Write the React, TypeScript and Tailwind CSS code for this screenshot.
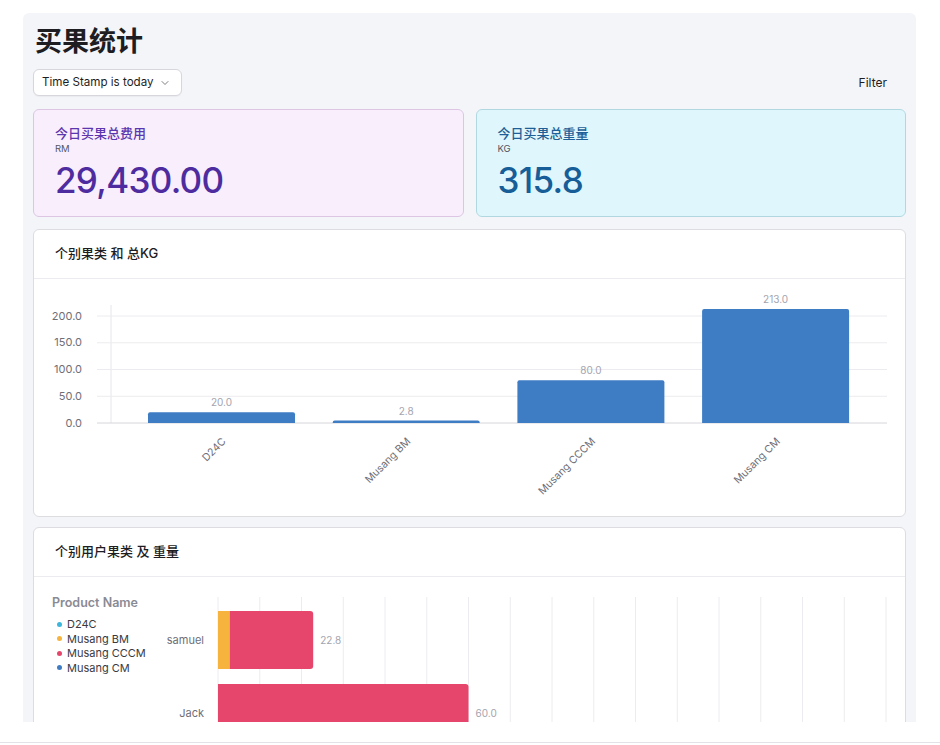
import { ChevronDown } from 'lucide-react';

const font = "font-['Inter','Noto_Sans_CJK_SC',sans-serif]";

const fruits = [
  { name: 'D24C', kg: 20.0 },
  { name: 'Musang BM', kg: 2.8 },
  { name: 'Musang CCCM', kg: 80.0 },
  { name: 'Musang CM', kg: 213.0 },
];

const legend = [
  { name: 'D24C', color: '#3cb6dc' },
  { name: 'Musang BM', color: '#f6b33d' },
  { name: 'Musang CCCM', color: '#e7466c' },
  { name: 'Musang CM', color: '#3e7dc4' },
];

function StatCard({
  title,
  unit,
  value,
  tone,
}: {
  title: string;
  unit: string;
  value: string;
  tone: 'purple' | 'cyan';
}) {
  const purple = tone === 'purple';
  return (
    <div
      className={
        purple
          ? 'h-[108px] rounded-[6px] border border-[#dcc6e3] bg-[#f9effc] px-[21px] pt-[13px]'
          : 'h-[108px] rounded-[6px] border border-[#b1d8e1] bg-[#dff7fc] px-[21px] pt-[13px]'
      }
    >
      <div className={purple ? 'text-[13px] leading-[20px] font-medium text-[#5b36ae]' : 'text-[13px] leading-[20px] font-medium text-[#1d5f96]'}>
        {title}
      </div>
      <div className="text-[9.5px] leading-[12px] text-[#55555c]">{unit}</div>
      <div
        className={
          purple
            ? 'mt-[3px] text-[35px] leading-[44px] font-medium tracking-[-0.02em] text-[#4e2c9f]'
            : 'mt-[3px] text-[35px] leading-[44px] font-medium tracking-[-0.02em] text-[#175e98]'
        }
      >
        {value}
      </div>
    </div>
  );
}

function KgChart() {
  const base = 144;
  const scale = 107 / 200;
  const ticks = [0, 50, 100, 150, 200];
  return (
    <svg width="870" height="237" className="block">
      <line x1="77" y1="26" x2="77" y2={base} stroke="#e6e6ea" />
      {ticks.map((t) => {
        const y = base - t * scale;
        return (
          <g key={t}>
            <line x1="63" x2="853" y1={y} y2={y} stroke={t === 0 ? '#d6d6dc' : '#ececf0'} />
            <text x="48" y={y + 3.5} textAnchor="end" fontSize="11" fill="#6e6e78">
              {t.toFixed(1)}
            </text>
          </g>
        );
      })}
      {fruits.map((f, i) => {
        const x = 114 + i * 184.7;
        const h = Math.max(f.kg * scale, 2.5);
        const cx = x + 73.5;
        return (
          <g key={f.name}>
            <path
              d={`M${x},${base} L${x},${base - h + 2} Q${x},${base - h} ${x + 2},${base - h} L${x + 145},${base - h} Q${x + 147},${base - h} ${x + 147},${base - h + 2} L${x + 147},${base} Z`}
              fill="#3e7dc4"
            />
            <text x={cx} y={base - h - 6} textAnchor="middle" fontSize="10" fill="#a4a4ae">
              {f.kg.toFixed(1)}
            </text>
            <text
              x={cx + 5}
              y={163}
              textAnchor="end"
              fontSize="10.5"
              fill="#6e6e78"
              transform={`rotate(-45 ${cx + 5} 163)`}
            >
              {f.name}
            </text>
          </g>
        );
      })}
    </svg>
  );
}

function UserChart() {
  const x0 = 78;
  const unit = 4.175;
  const lines = Array.from({ length: 17 }, (_, i) => x0 + i * 41.75);
  const rows = [
    { name: 'samuel', y: 34, parts: [{ v: 2.8, c: '#f6b33d' }, { v: 20, c: '#e7466c' }], total: 22.8 },
    { name: 'Jack', y: 107, parts: [{ v: 60, c: '#e7466c' }], total: 60.0 },
  ];
  return (
    <svg width="765" height="200" className="block shrink-0">
      {lines.map((x) => (
        <line key={x} x1={x} x2={x} y1="20" y2="200" stroke="#ececf0" />
      ))}
      {rows.map((r) => {
        let cur = x0;
        const end = x0 + r.total * unit;
        return (
          <g key={r.name}>
            {r.parts.map((p, i) => {
              const w = p.v * unit;
              const x = cur;
              cur += w;
              const last = i === r.parts.length - 1;
              return last ? (
                <path
                  key={i}
                  d={`M${x},${r.y} L${x + w - 3},${r.y} Q${x + w},${r.y} ${x + w},${r.y + 3} L${x + w},${r.y + 55} Q${x + w},${r.y + 58} ${x + w - 3},${r.y + 58} L${x},${r.y + 58} Z`}
                  fill={p.c}
                />
              ) : (
                <rect key={i} x={x} y={r.y} width={w} height="58" fill={p.c} />
              );
            })}
            <text x="64" y={r.y + 33} textAnchor="end" fontSize="11" fill="#6e6e78">
              {r.name}
            </text>
            <text x={end + 7} y={r.y + 33} fontSize="10" fill="#a4a4ae">
              {r.total.toFixed(1)}
            </text>
          </g>
        );
      })}
    </svg>
  );
}

function ChartCard({ title, children }: { title: string; children: React.ReactNode }) {
  return (
    <div className="rounded-[6px] border border-[#dcdce1] bg-white">
      <div className="h-[49px] border-b border-[#ececf0] pl-[21px] flex items-center text-[13px] font-medium text-[#1c1c22]">
        {title}
      </div>
      {children}
    </div>
  );
}

export default function App() {
  return (
    <div className={`w-[940px] h-[745px] bg-white overflow-hidden ${font}`}>
      <div className="pl-[23px] pr-[24px] pt-[13px]">
        <div className="h-[709px] overflow-hidden rounded-t-[6px] bg-[#f4f5f9] px-[10px] pt-[11px]">
          <h1 className="pl-[2px] text-[27px] leading-[36px] font-semibold text-[#1d1d22]">买果统计</h1>
          <div className="mt-[9px] flex items-center justify-between">
            <button className="flex h-[27px] w-[149px] items-center justify-between rounded-[6px] border border-[#d6d6dc] bg-white pl-[8px] pr-[10px] text-[11.6px] text-[#1d1d22] shadow-[0_1px_1px_rgba(0,0,0,0.04)]">
              <span>Time Stamp is today</span>
              <ChevronDown size={12} strokeWidth={1.5} className="text-[#55555c]" />
            </button>
            <button className="pr-[19px] text-[12px] text-[#1d1d22]">Filter</button>
          </div>
          <div className="mt-[13px] grid grid-cols-2 gap-[12px]">
            <StatCard title="今日买果总费用" unit="RM" value="29,430.00" tone="purple" />
            <StatCard title="今日买果总重量" unit="KG" value="315.8" tone="cyan" />
          </div>
          <div className="mt-[12px]">
            <ChartCard title="个别果类 和 总KG">
              <KgChart />
            </ChartCard>
          </div>
          <div className="mt-[10px]">
            <ChartCard title="个别用户果类 及 重量">
              <div className="flex">
                <div className="w-[106px] shrink-0 pl-[18px] pt-[17px]">
                  <div className="text-[12.5px] leading-[18px] font-semibold text-[#8a8a94] whitespace-nowrap">Product Name</div>
                  <div className="mt-[5px] flex flex-col">
                    {legend.map((l) => (
                      <div key={l.name} className="flex h-[14.5px] items-center gap-[5px] pl-[5px] text-[11px] text-[#3a3a42] whitespace-nowrap">
                        <span className="h-[5px] w-[5px] shrink-0 rounded-full" style={{ backgroundColor: l.color }} />
                        {l.name}
                      </div>
                    ))}
                  </div>
                </div>
                <UserChart />
              </div>
            </ChartCard>
          </div>
        </div>
      </div>
      <div className="mt-[20px] h-px bg-[#e3e3e7]" />
    </div>
  );
}
